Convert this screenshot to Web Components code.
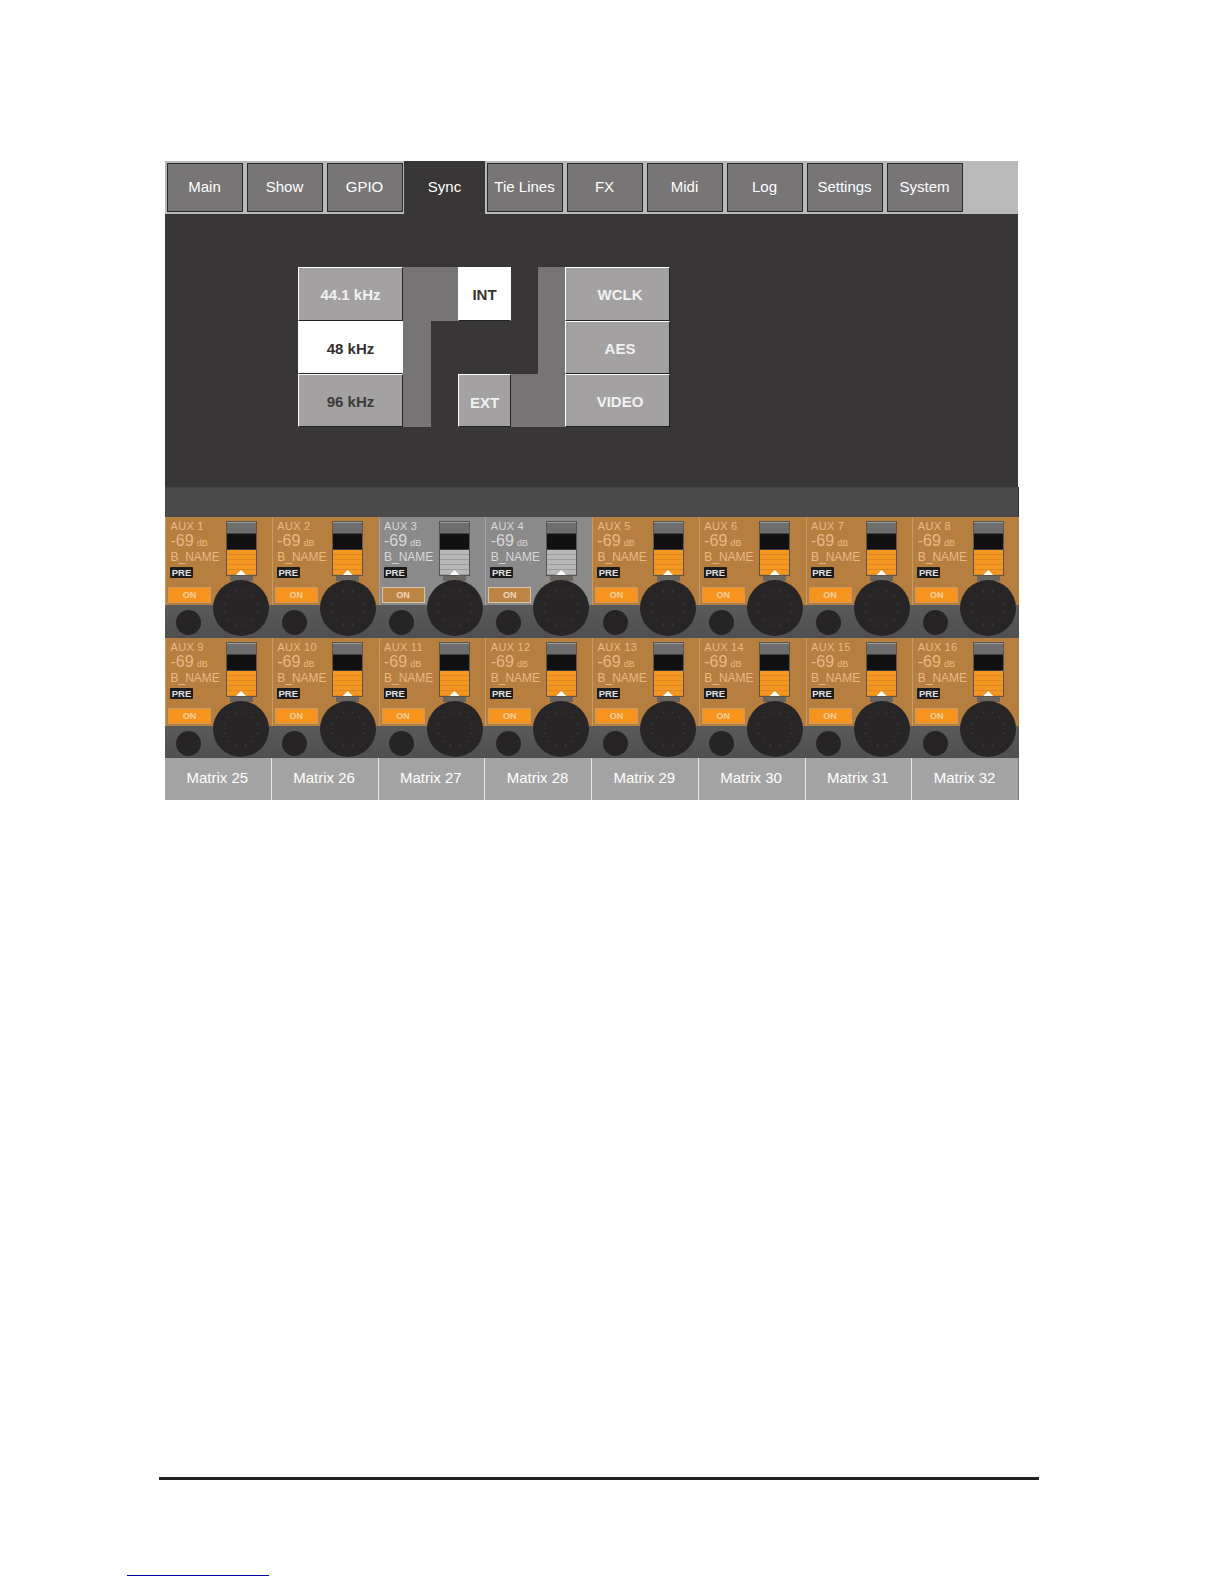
<!DOCTYPE html>
<html>
<head>
<meta charset="utf-8">
<title>Sync</title>
<style>
  html, body { margin: 0; background: #fff; font-family: "Liberation Sans", Arial, sans-serif; }
  console-page { display: block; }
</style>
</head>
<body>
<console-page></console-page>

<script>
class TabBar extends HTMLElement {
  constructor() {
    super();
    this.attachShadow({ mode: 'open' });
    const tabs = ['Main', 'Show', 'GPIO', 'Sync', 'Tie Lines', 'FX', 'Midi', 'Log', 'Settings', 'System'];
    this.shadowRoot.innerHTML = `
      <style>
        :host { display: flex; gap: 4px; box-sizing: border-box; width: 853px; height: 53px; padding: 2px 0 0 2px; background: #b9b9b9; }
        .tab {
          box-sizing: border-box; width: 76px; height: 49px; padding: 0 1px 3px 0;
          display: flex; align-items: center; justify-content: center;
          background: #777576; border: 1px solid #2b2a2a; color: #fff; font-size: 15px;
        }
        .tab.active { width: 81px; height: 53px; margin: -2px -2px 0 -3px; padding: 0 0 3px 0; background: #383637; border: 0; }
      </style>
      ${tabs.map(t => `<div class="tab${t === 'Sync' ? ' active' : ''}">${t}</div>`).join('')}
    `;
  }
}
customElements.define('tab-bar', TabBar);

class SyncButton extends HTMLElement {
  constructor() {
    super();
    this.attachShadow({ mode: 'open' });
    this.shadowRoot.innerHTML = `
      <style>
        :host {
          display: flex; align-items: center; justify-content: center; box-sizing: border-box; padding-top: 1px;
          background: #a3a1a1; color: #f1f1f1; font-size: 15px; font-weight: bold;
          border-top: 1px solid #fff; border-left: 1px solid #fff; border-bottom: 1px solid #222; border-right: 1px solid #222;
        }
        :host([on]) { background: #fff; color: #333132; border-color: #fff; border-bottom-color: #222; }
        :host([dark]) { color: #3d3b3c; }
      </style>
      <slot></slot>
    `;
  }
}
customElements.define('sync-button', SyncButton);

class SyncPanel extends HTMLElement {
  constructor() {
    super();
    this.attachShadow({ mode: 'open' });
    this.shadowRoot.innerHTML = `
      <style>
        :host { display: block; box-sizing: border-box; width: 853px; height: 273px; padding: 53px 0 0 133px; background: #383637; }
        .grid {
          display: grid;
          grid-template-columns: 105px 28px 27px 53px 27px 27px 105px;
          grid-template-rows: 54px 53px 53px;
        }
        .wire { background: #767475; }
        .a { grid-column: 2 / 4; grid-row: 1; }
        .b { grid-column: 2; grid-row: 1 / 4; }
        .c { grid-column: 5 / 7; grid-row: 3; }
        .d { grid-column: 6; grid-row: 1 / 4; }
        .l { grid-column: 1; }
        .m { grid-column: 4; }
        .r { grid-column: 7; padding-left: 5px; }
        .ext { padding-top: 4px; }
      </style>
      <div class="grid">
        <div class="wire a"></div><div class="wire b"></div>
        <div class="wire c"></div><div class="wire d"></div>
        <sync-button class="l" style="grid-row:1">44.1 kHz</sync-button>
        <sync-button class="l" style="grid-row:2" on>48 kHz</sync-button>
        <sync-button class="l" style="grid-row:3" dark>96 kHz</sync-button>
        <sync-button class="m" style="grid-row:1" on>INT</sync-button>
        <sync-button class="m ext" style="grid-row:3">EXT</sync-button>
        <sync-button class="r" style="grid-row:1">WCLK</sync-button>
        <sync-button class="r" style="grid-row:2">AES</sync-button>
        <sync-button class="r" style="grid-row:3">VIDEO</sync-button>
      </div>
    `;
  }
}
customElements.define('sync-panel', SyncPanel);

class RotaryKnob extends HTMLElement {
  constructor() {
    super();
    this.attachShadow({ mode: 'open' });
    let ticks = '';
    for (let i = 0; i < 12; i++) {
      const a = (i * 30 + 15) * Math.PI / 180;
      const x1 = (28 + 16 * Math.sin(a)).toFixed(1), y1 = (28 - 16 * Math.cos(a)).toFixed(1);
      const x2 = (28 + 18 * Math.sin(a)).toFixed(1), y2 = (28 - 18 * Math.cos(a)).toFixed(1);
      ticks += `<line x1="${x1}" y1="${y1}" x2="${x2}" y2="${y2}"/>`;
    }
    this.shadowRoot.innerHTML = `
      <style>
        :host { display: block; width: 56px; height: 56px; }
        svg { display: block; }
      </style>
      <svg width="56" height="56" viewBox="0 0 56 56">
        <circle cx="28" cy="28" r="28" fill="#272526"/>
        <g stroke="#3f3c3c" stroke-width="1" stroke-linecap="round">${ticks}</g>
      </svg>
    `;
  }
}
customElements.define('rotary-knob', RotaryKnob);

class AuxStrip extends HTMLElement {
  constructor() {
    super();
    this.attachShadow({ mode: 'open' });
    this.shadowRoot.innerHTML = `
      <style>
        :host {
          --body: #b77f3f; --text: #e9b884; --fill: #f4961f; --line: #dd8a24;
          --on: #f7941d; --on-border: #c99a63; --on-text: #f6cf9e;
          display: flex; box-sizing: border-box; height: 100%;
          background: linear-gradient(var(--body) 88px, #5b5a5a 88px, #504f4f 100%);
          font-family: "Liberation Sans", Arial, sans-serif;
          overflow: hidden; position: relative;
        }
        :host([off]) {
          --body: #8b8a8a; --text: #d8d8d8; --fill: #b9b8b8; --line: #9c9b9b;
          --on: #bd8545; --on-border: #dcc4a6; --on-text: #f0d6b4;
        }
        :host::after { content: ""; position: absolute; left: 0; top: 0; width: 1px; height: 88px; background: rgba(255,255,255,.22); }
        .left { width: 45px; margin-left: 3px; padding-top: 3px; flex: none; display: flex; flex-direction: column; align-items: flex-start; color: var(--text); white-space: nowrap; }
        .name { font-size: 11px; line-height: 12px; margin-left: 2.5px; letter-spacing: .3px; }
        .level { font-size: 16px; line-height: 16px; margin: .5px 0 0 2.5px; }
        .level small { font-size: 9px; margin-left: 3px; }
        .bus { font-size: 12px; line-height: 14px; margin: -.5px 0 0 2.5px; }
        .pre { width: 23px; height: 11px; margin: 2.5px 0 0 2px; background: #1d1c1d; color: #e4e4e4; font-size: 9.5px; font-weight: bold; line-height: 11px; text-align: center; border-radius: 1px; }
        .on { box-sizing: border-box; width: 43px; height: 16px; margin-top: 9.5px; background: var(--on); border: 1px solid var(--on-border); color: var(--on-text); font-size: 9px; font-weight: bold; line-height: 14px; text-align: center; }
        .jog { width: 25px; height: 25px; margin: 6.5px 0 0 7.5px; border-radius: 50%; background: #262425; flex: none; }
        .right { width: 56px; flex: none; padding-top: 4px; display: flex; flex-direction: column; align-items: center; }
        .fader { box-sizing: border-box; width: 31px; height: 55px; border: 1.5px solid #5b554e; display: flex; flex-direction: column; position: relative; background: #000; }
        .cap { height: 10px; background: #6d6d6d; border-top: 1px solid #9a9a9a; border-bottom: 1px solid #444; }
        .gap { height: 15px; background: #121112; border-bottom: 1px solid #3c3c3c; }
        .fill { flex: 1; background: repeating-linear-gradient(var(--fill) 0 4px, var(--line) 4px 5px); }
        .mark { position: absolute; left: 50%; bottom: 0; width: 10px; height: 5px; margin-left: -5px; background: #fff; clip-path: polygon(50% 0, 100% 100%, 0 100%); }
        .stem { width: 23px; height: 5px; background: #6a6561; }
        rotary-knob { margin-top: -1px; }
      </style>
      <div class="left">
        <div class="name"><slot></slot></div>
        <div class="level">-69<small>dB</small></div>
        <div class="bus">B_NAME</div>
        <div class="pre">PRE</div>
        <div class="on">ON</div>
        <div class="jog"></div>
      </div>
      <div class="right">
        <div class="fader">
          <div class="cap"></div>
          <div class="gap"></div>
          <div class="fill"></div>
          <div class="mark"></div>
        </div>
        <div class="stem"></div>
        <rotary-knob></rotary-knob>
      </div>
    `;
  }
}
customElements.define('aux-strip', AuxStrip);

class StripBank extends HTMLElement {
  constructor() {
    super();
    this.attachShadow({ mode: 'open' });
    let cells = '';
    for (let i = 1; i <= 16; i++) {
      cells += `<aux-strip${i === 3 || i === 4 ? ' off' : ''}>AUX ${i}</aux-strip>`;
    }
    this.shadowRoot.innerHTML = `
      <style>
        :host { display: grid; width: 854px; grid-template-columns: repeat(8, 1fr); grid-template-rows: 121px 120px; }
      </style>
      ${cells}
    `;
  }
}
customElements.define('strip-bank', StripBank);

class MatrixLabels extends HTMLElement {
  constructor() {
    super();
    this.attachShadow({ mode: 'open' });
    let cells = '';
    for (let n = 25; n <= 32; n++) cells += `<div>Matrix ${n}</div>`;
    this.shadowRoot.innerHTML = `
      <style>
        :host { display: grid; width: 854px; height: 42px; grid-template-columns: repeat(8, 1fr); background: #a4a3a3; color: #fff; font-size: 15px; }
        div { box-sizing: border-box; display: flex; align-items: center; justify-content: center; padding: 0 1px 3px 0; border-right: 1px solid #e6e6e6; }
        div:last-child { border-right-color: #77767a; }
      </style>
      ${cells}
    `;
  }
}
customElements.define('matrix-labels', MatrixLabels);

class PageFooter extends HTMLElement {
  constructor() {
    super();
    this.attachShadow({ mode: 'open' });
    this.shadowRoot.innerHTML = `
      <style>
        :host { display: flex; flex-direction: column; align-items: flex-start; }
        .rule { width: 880px; height: 2px; margin: 677px 0 0 159px; background: #231f20; border-bottom: .5px solid #231f20; }
        .link { width: 142px; height: 1.5px; margin: 94.5px 0 0 127px; background: #0000a8; }
      </style>
      <div class="rule"></div>
      <div class="link"></div>
    `;
  }
}
customElements.define('page-footer', PageFooter);

class ConsolePage extends HTMLElement {
  constructor() {
    super();
    this.attachShadow({ mode: 'open' });
    this.shadowRoot.innerHTML = `
      <style>
        :host { display: block; font-family: "Liberation Sans", Arial, sans-serif; }
        .screen { margin-left: 165px; padding-top: 161px; }
        .title { box-sizing: border-box; width: 854px; height: 30px; background: #4b4a4a; border-right: 1px solid #2a2a2a; border-top: 1px solid #454444; }
      </style>
      <div class="screen">
        <tab-bar></tab-bar>
        <sync-panel></sync-panel>
        <div class="title"></div>
        <strip-bank></strip-bank>
        <matrix-labels></matrix-labels>
      </div>
      <page-footer></page-footer>
    `;
  }
}
customElements.define('console-page', ConsolePage);
</script>
</body>
</html>
